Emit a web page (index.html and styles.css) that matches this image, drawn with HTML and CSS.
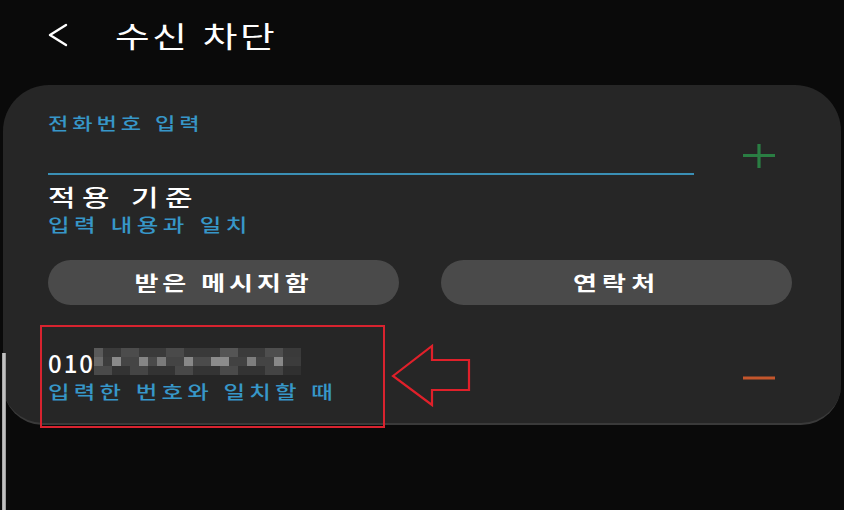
FILE: index.html
```html
<!DOCTYPE html>
<html lang="ko">
<head>
  <meta charset="UTF-8">
  <meta name="viewport" content="width=device-width, initial-scale=1.0">
  <title>수신 차단</title>
  <link rel="stylesheet" href="styles.css">
</head>
<body>
  <header class="topbar">
    <svg class="back" width="24" height="26" viewBox="0 0 24 26">
      <polyline points="20,3 4,13 20,23" fill="none" stroke="#fff" stroke-width="2.4" stroke-linecap="round" stroke-linejoin="round"/>
    </svg>
    <h1 class="title wide">수신 차단</h1>
  </header>

  <main class="card">
    <div class="field-row">
      <div class="field">
        <div class="field-label wide">전화번호 입력</div>
      </div>
      <!-- 추가 -->
      <svg class="icon-plus" width="32" height="24" viewBox="0 0 32 24">
        <path d="M0 11.5H32M16 0V24" stroke="#2a7e43" stroke-width="3.2"/>
      </svg>
    </div>

    <div class="rule">
      <div class="rule-title wide">적용 기준</div>
      <div class="rule-value wide">입력 내용과 일치</div>
    </div>

    <div class="buttons">
      <button class="pill"><span class="pill-text">받은 메시지함</span></button>
      <button class="pill"><span class="pill-text short">연락처</span></button>
    </div>

    <div class="item">
      <div class="item-text">
        <div class="number">010<span class="mosaic"><i class="m1"></i><i class="m2"></i><i class="m3"></i></span></div>
        <div class="item-sub wide">입력한 번호와 일치할 때</div>
      </div>
      <!-- 삭제 -->
      <svg class="icon-minus" width="32" height="4" viewBox="0 0 32 4">
        <path d="M0 2H32" stroke="#c4562c" stroke-width="3"/>
      </svg>
    </div>

    <!-- 캡처 표시 -->
    <div class="mark-box"></div>
    <svg class="mark-arrow" width="82" height="66" viewBox="0 0 82 66">
      <polygon points="3,33 42,3 42,17 79,17 79,47 42,47 42,62" fill="none" stroke="#e0202a" stroke-width="2.2"/>
    </svg>
  </main>

  <div class="edge"></div>
</body>
</html>
```

FILE: styles.css
```css
body {
  margin: 0;
  width: 844px;
  height: 510px;
  overflow: hidden;
  position: relative;
  background-color: #0a0a0a;
  color: #fff;
  font-family: "Noto Sans CJK KR", "Noto Sans", sans-serif;
}
/* 캡처 화면이 가로로 늘어나 있어서 글자도 같이 늘림 */
.wide {
  width: fit-content;
  transform: scaleX(1.3);
  transform-origin: left center;
}
.topbar {
  height: 85px;
  display: flex;
  align-items: center;
  padding-left: 46px;
  padding-bottom: 16px;
  box-sizing: border-box;
}
.back {
  display: block;
}
.title {
  margin: 0 0 0 45px;
  font-size: 29px;
  font-weight: 400;
  letter-spacing: 2px;
}
.card {
  position: relative;
  margin: 0 3px;
  height: 340px;
  box-sizing: border-box;
  padding: 27px 49px 0 45px;
  background-color: #262626;
  border-radius: 46px 46px 40px 40px;
  border-bottom: 2px solid #3a3a3a;
}
.field-row {
  display: flex;
  align-items: flex-end;
}
.field {
  width: 646px;
  height: 61px;
  border-bottom: 2px solid #3a8fb5;
}
.field-label {
  font-size: 17px;
  line-height: 22px;
  font-weight: 500;
  letter-spacing: 3px;
  color: #3797c8;
}
.icon-plus {
  margin-left: auto;
  margin-right: 17px;
  margin-bottom: 7px;
}
.rule {
  margin-top: 6px;
}
.rule-title {
  font-size: 23px;
  line-height: 31px;
  font-weight: 500;
  letter-spacing: 5px;
}
.rule-value {
  font-size: 18px;
  line-height: 24px;
  font-weight: 500;
  letter-spacing: 3.4px;
  color: #3797c8;
}
.buttons {
  display: flex;
  gap: 42px;
  margin-top: 24px;
}
.pill {
  flex: 1;
  height: 45px;
  border: none;
  border-radius: 23px;
  background-color: #4a4a4a;
  color: #fff;
  font-family: inherit;
  font-size: 20px;
  font-weight: 700;
  padding: 0;
}
.pill-text {
  display: inline-block;
  letter-spacing: 3px;
  transform: scaleX(1.3);
}
.pill-text.short {
  letter-spacing: 4px;
}
.item {
  display: flex;
  align-items: center;
  margin-top: 43px;
}
.number {
  font-size: 24px;
  line-height: 30px;
  font-weight: 500;
  letter-spacing: 2px;
  display: flex;
  align-items: center;
}
.mosaic {
  display: inline-flex;
  flex-direction: column;
  margin-left: -1px;
  margin-top: -4px;
}
.mosaic i {
  display: block;
  width: 207px;
  height: 9px;
}
.m1 {
  background: linear-gradient(90deg, #5a5a5a 0 9px, #3a3a3a 9px 27px, #4c4c4c 27px 45px, #3a3a3a 45px 72px, #4a4a4a 72px 90px, #393939 90px 126px, #555 126px 144px, #3b3b3b 144px 171px, #4e4e4e 171px 189px, #3a3a3a 189px);
}
.m2 {
  background: linear-gradient(90deg, #6a6a6a 0 9px, #3d3d3d 9px 18px, #8a8a8a 18px 27px, #454545 27px 45px, #858585 45px 54px, #4a4a4a 54px 63px, #7a7a7a 63px 72px, #444 72px 90px, #888 90px 99px, #4b4b4b 99px 117px, #8c8c8c 117px 135px, #424242 135px 153px, #7e7e7e 153px 162px, #444 162px 180px, #888 180px 189px, #3c3c3c 189px);
}
.m3 {
  background: linear-gradient(90deg, #4a4a4a 0 18px, #333 18px 36px, #454545 36px 54px, #333 54px 81px, #484848 81px 99px, #343434 99px 126px, #4a4a4a 126px 144px, #333 144px 171px, #444 171px 189px, #303030 189px);
}
.item-sub {
  margin-top: 1px;
  font-size: 18px;
  line-height: 24px;
  font-weight: 500;
  letter-spacing: 3.2px;
  color: #3797c8;
}
.icon-minus {
  margin-left: auto;
  margin-right: 17px;
  margin-top: 4px;
}
.mark-box {
  position: absolute;
  left: 37px;
  top: 240px;
  width: 341px;
  height: 99px;
  border: 2px solid #d8232f;
}
.mark-arrow {
  position: absolute;
  left: 387px;
  top: 258px;
}
.edge {
  position: absolute;
  left: 2px;
  top: 353px;
  width: 4px;
  height: 157px;
  background: linear-gradient(90deg, #9a9a9a, #d0d0d0, #8a8a8a);
}
```
